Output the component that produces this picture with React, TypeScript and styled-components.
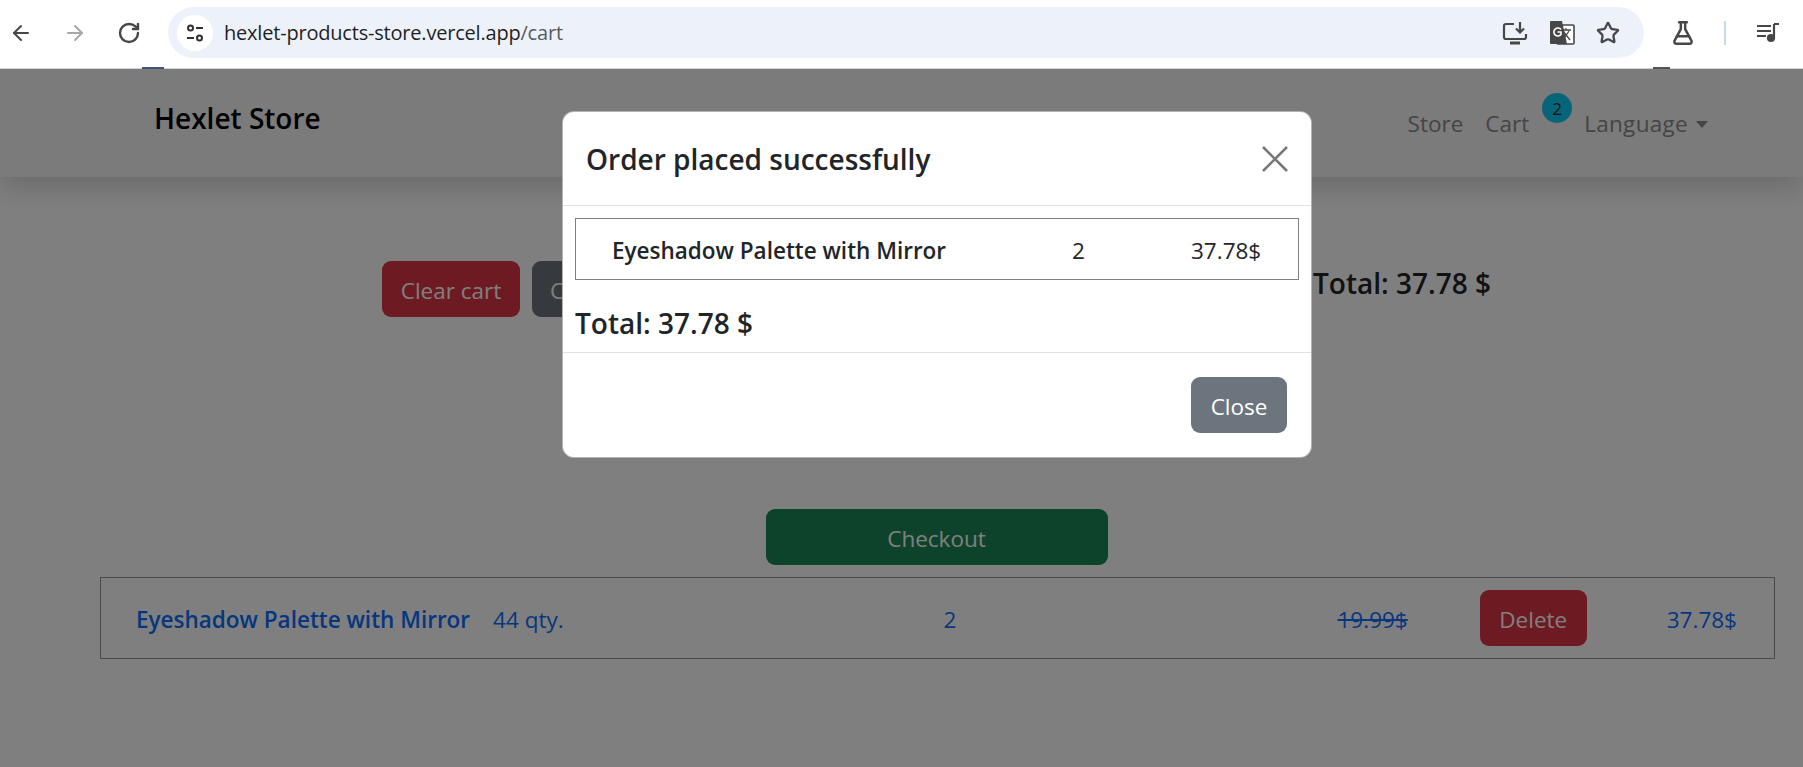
import React from 'react';
import styled, { createGlobalStyle } from 'styled-components';
import { ArrowLeft, ArrowRight, RotateCw, Star, FlaskConical } from 'lucide-react';

const GlobalStyle = createGlobalStyle`
  html, body {
    margin: 0;
    height: 100%;
    overflow: hidden;
    background: #fff;
    font-family: "Open Sans", "Noto Sans", sans-serif;
    color: #212529;
  }
`;

// browser chrome
const Chrome = styled.header`
  height: 65px;
  padding-bottom: 3px;
  display: flex;
  align-items: center;
  position: relative;
  background: #fff;
  border-bottom: 1px solid #d0d0d0;
  box-sizing: content-box;
`;

const TabPeek = styled.span<{ $left: number; $width: number; $color: string }>`
  position: absolute;
  left: ${(p) => p.$left}px;
  width: ${(p) => p.$width}px;
  bottom: -1px;
  height: 2px;
  background: ${(p) => p.$color};
`;

const NavIcons = styled.div`
  display: flex;
  align-items: center;
  gap: 30px;
  padding: 0 27px 0 9px;
  color: #474747;
`;

const UrlPill = styled.div`
  width: 1476px;
  height: 51px;
  flex: none;
  display: flex;
  align-items: center;
  border-radius: 26px;
  background: #edf2fa;
  padding: 0 24px 0 9px;
  box-sizing: border-box;
`;

const SiteButton = styled.span`
  width: 36px;
  height: 36px;
  border-radius: 50%;
  background: #fff;
  display: flex;
  align-items: center;
  justify-content: center;
  flex: none;
`;

const UrlText = styled.span`
  margin-left: 11px;
  font-size: 20px;
  letter-spacing: -0.2px;
  color: #1f1f1f;
  flex: 1;
`;

const UrlPath = styled.span`
  color: #5a5a5a;
`;

const PillIcons = styled.div`
  display: flex;
  align-items: center;
  gap: 21px;
  color: #474747;
`;

const ChromeRight = styled.div`
  display: flex;
  align-items: center;
  margin-left: 26px;
  color: #474747;
`;

const Separator = styled.span`
  width: 2px;
  height: 24px;
  margin: 0 30px 0 28px;
  background: #c6d8f4;
`;

// page
const Page = styled.div`
  position: relative;
  height: 698px;
  overflow: hidden;
`;

const Nav = styled.nav`
  height: 108px;
  display: flex;
  align-items: center;
  background: #f6f6f6;
  padding: 0 95px 0 154px;
  box-shadow: 0 12px 24px rgba(0, 0, 0, 0.15);
  position: relative;
`;

const Brand = styled.a`
  font-size: 28px;
  font-weight: 600;
  color: #000;
  margin-top: -10px;
  margin-right: auto;
`;

const NavLink = styled.a<{ $gap?: number }>`
  font-size: 22.5px;
  color: #8a8a8a;
  margin-left: ${(p) => p.$gap ?? 0}px;
`;

const LanguageLink = styled(NavLink)`
  letter-spacing: 0.3px;
`;

const Badge = styled.span`
  width: 30px;
  height: 30px;
  border-radius: 50%;
  background: #0dcaf0;
  color: #212529;
  font-size: 17px;
  display: flex;
  align-items: center;
  justify-content: center;
  margin: -30px 0 0 13px;
`;

const Caret = styled.span`
  display: inline-block;
  margin-left: 8px;
  vertical-align: 4px;
  border-top: 7px solid #8a8a8a;
  border-left: 6px solid transparent;
  border-right: 6px solid transparent;
`;

const Content = styled.main`
  margin: 0 28px 0 100px;
`;

const CartToolbar = styled.div`
  display: flex;
  align-items: center;
  gap: 12px;
  margin-top: 84px;
  padding-left: 282px;
`;

const Button = styled.button<{ $color: string; $width?: number }>`
  height: 56px;
  width: ${(p) => (p.$width ? `${p.$width}px` : 'auto')};
  padding: 2px 18px 0;
  border: none;
  border-radius: 9px;
  background: ${(p) => p.$color};
  color: #fff;
  font-family: inherit;
  font-size: 22.5px;
  white-space: nowrap;
  flex: none;
`;

const Total = styled.div`
  font-size: 28px;
  font-weight: 600;
  color: #212529;
`;

const CartTotal = styled(Total)`
  margin-left: auto;
  margin-right: 284px;
  margin-top: -12px;
`;

const CheckoutWrap = styled.div`
  display: flex;
  justify-content: center;
  margin-top: 192px;
  padding-right: 2px;
`;

const CartRow = styled.div`
  height: 82px;
  margin-top: 12px;
  display: flex;
  align-items: center;
  padding: 2px 37px 0 35px;
  border: 1px solid #949494;
  box-sizing: border-box;
  color: #0d6efd;
  font-size: 22.5px;
`;

const ProductName = styled.a`
  font-weight: 600;
`;

const Stock = styled.span`
  margin-left: 23px;
`;

const Count = styled.span`
  margin-left: 380px;
`;

const OldPrice = styled.s`
  margin-left: auto;
`;

const RowButton = styled(Button)`
  margin: -2px 80px 0 72px;
`;

// modal
const Backdrop = styled.div`
  position: absolute;
  inset: 0;
  background: rgba(0, 0, 0, 0.5);
`;

const Modal = styled.div`
  position: absolute;
  left: 562px;
  top: 42px;
  width: 750px;
  height: 347px;
  display: flex;
  flex-direction: column;
  background: #fff;
  border-radius: 12px;
  border: 1px solid rgba(0, 0, 0, 0.3);
  box-sizing: border-box;
`;

const ModalHeader = styled.div`
  height: 94px;
  flex: none;
  display: flex;
  align-items: center;
  justify-content: space-between;
  padding: 0 23px;
  border-bottom: 1px solid #dee2e6;
  box-sizing: border-box;
`;

const ModalTitle = styled.h5`
  margin: 0;
  font-size: 28px;
  font-weight: 600;
`;

const ModalBody = styled.div`
  flex: 1;
  padding: 12px 12px 0;
`;

const OrderRow = styled.div`
  height: 62px;
  display: grid;
  grid-template-columns: 1fr 119px 75px;
  align-items: center;
  padding: 2px 32px 0 36px;
  border: 1px solid #808080;
  box-sizing: border-box;
  font-size: 22.5px;
`;

const OrderName = styled.span`
  font-weight: 600;
`;

const ModalTotal = styled(Total)`
  margin-top: 24px;
`;

const ModalFooter = styled.div`
  height: 105px;
  flex: none;
  display: flex;
  align-items: center;
  justify-content: flex-end;
  padding: 0 24px;
  border-top: 1px solid #dee2e6;
  box-sizing: border-box;
`;

const CloseIcon = () => (
  <svg width="26" height="26" viewBox="0 0 26 26" fill="none" stroke="#777" strokeWidth="2.6">
    <path d="M1 1 25 25M25 1 1 25" />
  </svg>
);

const TuneIcon = () => (
  <svg width="20" height="20" viewBox="0 0 20 20" fill="none" stroke="#303030" strokeWidth="2">
    <circle cx="5.5" cy="5" r="2.5" />
    <path d="M11 5h7M2 15h7" />
    <circle cx="14.5" cy="15" r="2.5" />
  </svg>
);

const InstallIcon = () => (
  <svg width="26" height="24" viewBox="0 0 26 24" fill="none" stroke="currentColor" strokeWidth="2.2">
    <path d="M12 3H4a2 2 0 0 0-2 2v11a2 2 0 0 0 2 2h18a2 2 0 0 0 2-2v-3" />
    <path d="M8 22h10" strokeWidth="3" />
    <path d="M18 1v10M14 7.5l4 4 4-4" />
  </svg>
);

const TranslateIcon = () => (
  <svg width="26" height="26" viewBox="0 0 26 26" fill="none">
    <rect x="8" y="5" width="17" height="19" rx="1" fill="#fff" stroke="#474747" strokeWidth="1.6" />
    <path d="M12 10h10M17 8v2M14 20l6-9M14 11l7 9" stroke="#474747" strokeWidth="1.3" />
    <path d="M2 1h11l5 23H2a1 1 0 0 1-1-1V2a1 1 0 0 1 1-1Z" fill="#474747" />
    <path d="M12 9.5a4 4 0 1 0 0 5V12H8.5" stroke="#fff" strokeWidth="1.6" />
  </svg>
);

const QueueIcon = () => (
  <svg width="24" height="24" viewBox="0 0 24 24" fill="none" stroke="currentColor" strokeWidth="2.2">
    <path d="M1 5h14M1 10h14M1 15h9M18 3h5M18 3v14" />
    <circle cx="15" cy="17" r="3" fill="currentColor" />
  </svg>
);

export default function App() {
  return (
    <>
      <GlobalStyle />
      <Chrome>
        <NavIcons>
          <ArrowLeft size={24} />
          <ArrowRight size={24} color="#a8a8a8" />
          <RotateCw size={24} strokeWidth={2.4} />
        </NavIcons>
        <UrlPill>
          <SiteButton>
            <TuneIcon />
          </SiteButton>
          <UrlText>
            hexlet-products-store.vercel.app<UrlPath>/cart</UrlPath>
          </UrlText>
          <PillIcons>
            <InstallIcon />
            <TranslateIcon />
            <Star size={24} strokeWidth={2.3} />
          </PillIcons>
        </UrlPill>
        <ChromeRight>
          <FlaskConical size={26} strokeWidth={2.3} />
          <Separator />
          <QueueIcon />
        </ChromeRight>
        <TabPeek $left={142} $width={22} $color="#3f5277" />
        <TabPeek $left={1653} $width={17} $color="#555" />
      </Chrome>
      <Page>
        <Nav>
          <Brand>Hexlet Store</Brand>
          <NavLink>Store</NavLink>
          <NavLink $gap={22}>Cart</NavLink>
          <Badge>2</Badge>
          <LanguageLink $gap={12}>
            Language
            <Caret />
          </LanguageLink>
        </Nav>
        <Content>
          <CartToolbar>
            <Button $color="#dc3545" $width={138}>Clear cart</Button>
            <Button $color="#6c757d">Continue shopping</Button>
            <CartTotal>Total: 37.78 $</CartTotal>
          </CartToolbar>
          <CheckoutWrap>
            <Button $color="#198754" $width={342}>Checkout</Button>
          </CheckoutWrap>
          <CartRow>
            <ProductName>Eyeshadow Palette with Mirror</ProductName>
            <Stock>44 qty.</Stock>
            <Count>2</Count>
            <OldPrice>19.99$</OldPrice>
            <RowButton $color="#dc3545" $width={107}>Delete</RowButton>
            <span>37.78$</span>
          </CartRow>
        </Content>
        <Backdrop />
        <Modal>
          <ModalHeader>
            <ModalTitle>Order placed successfully</ModalTitle>
            <CloseIcon />
          </ModalHeader>
          <ModalBody>
            <OrderRow>
              <OrderName>Eyeshadow Palette with Mirror</OrderName>
              <span>2</span>
              <span>37.78$</span>
            </OrderRow>
            <ModalTotal>Total: 37.78 $</ModalTotal>
          </ModalBody>
          <ModalFooter>
            <Button $color="#6c757d" $width={96}>Close</Button>
          </ModalFooter>
        </Modal>
      </Page>
    </>
  );
}
